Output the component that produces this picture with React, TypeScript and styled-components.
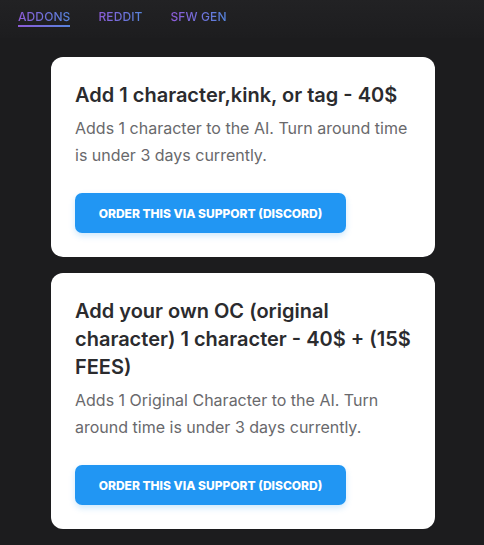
import React from "react";
import styled, { createGlobalStyle } from "styled-components";

const Global = createGlobalStyle`
  html, body { margin: 0; padding: 0; background: #1c1c1e; }
  body { font-family: Inter, "Noto Sans", sans-serif; -webkit-font-smoothing: antialiased; }
  * { box-sizing: border-box; }
`;

const Page = styled.div`
  min-height: 545px;
  background: #1c1c1e;
`;

const Header = styled.nav`
  display: flex;
  gap: 28px;
  padding: 10px 18px 11px;
  background: linear-gradient(180deg, #222224 0%, #1d1d1f 100%);
`;

const NavLink = styled.a<{ $active?: boolean }>`
  position: relative;
  font-size: 12px;
  line-height: 14px;
  font-weight: 500;
  letter-spacing: 0.1px;
  text-transform: uppercase;
  text-decoration: none;
  background: linear-gradient(90deg, #8e5bd8 0%, #5584dc 100%);
  -webkit-background-clip: text;
  background-clip: text;
  color: transparent;
  padding-bottom: 1px;
  border-bottom: 2px solid transparent;
  border-image: ${(p) =>
    p.$active ? "linear-gradient(90deg, #8e5bd8, #5584dc) 1" : "none"};
`;

const Main = styled.main`
  display: flex;
  flex-direction: column;
  align-items: center;
  gap: 16px;
  padding: 19px 0 18px 2px;
`;

const Card = styled.section`
  width: 384px;
  background: #ffffff;
  border-radius: 12px;
  padding: 24px;
  display: flex;
  flex-direction: column;
  align-items: flex-start;
`;

const Title = styled.h2`
  margin: 0;
  font-size: 20px;
  line-height: 28px;
  font-weight: 600;
  color: #2b2b2e;
`;

const Desc = styled.p`
  margin: 6px 0 0;
  font-size: 16px;
  line-height: 27px;
  font-weight: 400;
  color: #69696c;
`;

const Button = styled.button`
  margin-top: 24px;
  width: 271px;
  height: 40px;
  border: none;
  border-radius: 7px;
  background: #2196f3;
  color: #ffffff;
  font-family: Inter, "Noto Sans", sans-serif;
  font-size: 12px;
  font-weight: 800;
  letter-spacing: 0;
  text-transform: uppercase;
  box-shadow: 0 3px 6px rgba(33, 150, 243, 0.22);
  cursor: pointer;
`;

const items = [
  {
    title: "Add 1 character,kink, or tag - 40$",
    desc: "Adds 1 character to the AI. Turn around time is under 3 days currently.",
  },
  {
    title: "Add your own OC (original character) 1 character - 40$ + (15$ FEES)",
    desc: "Adds 1 Original Character to the AI. Turn around time is under 3 days currently.",
  },
];

export default function App() {
  return (
    <Page>
      <Global />
      <Header>
        <NavLink href="#" $active>Addons</NavLink>
        <NavLink href="#">Reddit</NavLink>
        <NavLink href="#">SFW Gen</NavLink>
      </Header>
      <Main>
        {items.map((it) => (
          <Card key={it.title}>
            <Title>{it.title}</Title>
            <Desc>{it.desc}</Desc>
            <Button>Order this via support (Discord)</Button>
          </Card>
        ))}
      </Main>
    </Page>
  );
}
